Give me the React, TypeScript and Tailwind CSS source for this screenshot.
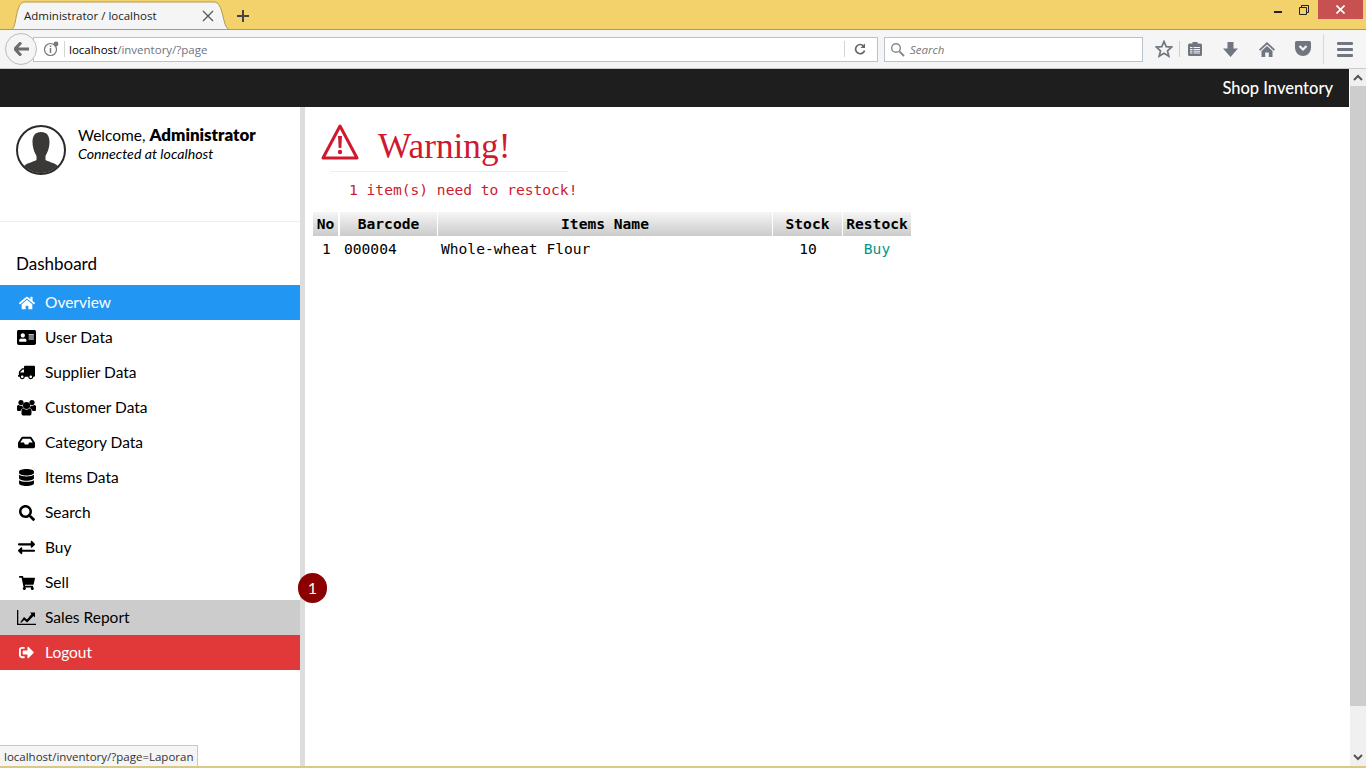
import {
  FaHome,
  FaAddressCard,
  FaTruck,
  FaInbox,
  FaDatabase,
  FaSearch,
  FaExchangeAlt,
  FaShoppingCart,
  FaSignOutAlt,
} from "react-icons/fa";

function UsersIcon() {
  return (
    <svg width="19" height="18" viewBox="0 0 19 18" fill="currentColor">
      <circle cx="9.500" cy="6.500" r="3.600" />
      <circle cx="4" cy="3.600" r="2.600" />
      <circle cx="15" cy="3.600" r="2.600" />
      <path d="M4.500 11.500 C4.500 10 5.500 9.500 6.500 9.500 C8 11 11 11 12.500 9.500 C13.500 9.500 14.500 10 14.500 11.500 V14.500 C14.500 16 13.500 16.500 12.500 16.500 H6.500 C5.500 16.500 4.500 16 4.500 14.500 Z" />
      <path d="M0 7.500 C0 6.500 1 6 1.800 6 C3 7 4.200 7 5.300 6.800 C5.600 8 6 8.700 6.500 9.200 C4.800 9.500 3.600 10.500 3.600 12 H1.500 C0.500 12 0 11.500 0 10.500 Z" />
      <path d="M19 7.500 C19 6.500 18 6 17.200 6 C16 7 14.800 7 13.700 6.800 C13.400 8 13 8.700 12.500 9.200 C14.200 9.500 15.400 10.500 15.400 12 H17.500 C18.500 12 19 11.500 19 10.500 Z" />
    </svg>
  );
}

function ChartIcon() {
  return (
    <svg width="19" height="15" viewBox="0 0 19 15" fill="currentColor">
      <path d="M0 0 H1.300 V13.700 H19 V15 H0 Z" />
      <path d="M3 12.500 L7 7 L10 9.500 L14.500 4 L13 2.500 H18 V7.500 L16.500 6 L10.200 12.500 L7.200 10 L4.500 12.500 Z" />
    </svg>
  );
}

const menu = [
  { label: "Overview", icon: <FaHome size={16} />, row: "bg-[#2196f3] text-white" },
  { label: "User Data", icon: <FaAddressCard size={19} />, row: "text-black" },
  { label: "Supplier Data", icon: <FaTruck size={17} className="-scale-x-100" />, row: "text-black" },
  { label: "Customer Data", icon: <UsersIcon />, row: "text-black" },
  { label: "Category Data", icon: <FaInbox size={17} />, row: "text-black" },
  { label: "Items Data", icon: <FaDatabase size={17} />, row: "text-black" },
  { label: "Search", icon: <FaSearch size={16} />, row: "text-black" },
  { label: "Buy", icon: <FaExchangeAlt size={17} />, row: "text-black" },
  { label: "Sell", icon: <FaShoppingCart size={16} />, row: "text-black", badge: "1" },
  { label: "Sales Report", icon: <ChartIcon />, row: "bg-[#cccccc] text-black" },
  { label: "Logout", icon: <FaSignOutAlt size={15} />, row: "bg-[#e13939] text-white" },
];

function TabBar() {
  return (
    <div className="h-[30px] flex bg-[#f3d26b] border-b border-[#b09a50] relative">
      {/* Active tab */}
      <svg className="absolute left-0 top-0" width="232" height="30" viewBox="0 0 232 30">
        <path d="M12 29.500 C17 27 15 2 25 2 H214 C224 2 222 27 229 29.500 Z" fill="#f5f5f5" stroke="#b09a50" />
      </svg>
      <span className="absolute left-[24px] top-[8px] text-[11.500px] leading-[16px] text-[#222]">Administrator / localhost</span>
      <svg className="absolute left-[202px] top-[10px]" width="12" height="12" viewBox="0 0 12 12">
        <path d="M1 1 L11 11 M11 1 L1 11" stroke="#555" strokeWidth="1.300" />
      </svg>
      <svg className="absolute left-[237px] top-[10px]" width="12" height="12" viewBox="0 0 12 12">
        <path d="M6 0 V12 M0 6 H12" stroke="#444" strokeWidth="2" />
      </svg>
      {/* Window controls */}
      <div className="ml-auto flex items-start mr-[3px]">
        <div className="w-[45px] h-[19px] flex items-center justify-end pr-[14px]">
          <div className="w-[8px] h-[2px] mt-[5px] bg-[#222]" />
        </div>
        <div className="w-[16px] h-[19px] flex items-center justify-center">
          <svg width="10" height="10" viewBox="0 0 10 10">
            <path d="M2.500 2.500 V0.500 H9.500 V7.500 H7.500 M0.500 2.500 H7.500 V9.500 H0.500 Z" fill="none" stroke="#222" />
          </svg>
        </div>
        <div className="w-[6px]" />
        <div className="w-[45px] h-[19px] bg-[#c75050] flex items-center justify-center">
          <svg width="9" height="9" viewBox="0 0 9 9">
            <path d="M0.500 0.500 L8.500 8.500 M8.500 0.500 L0.500 8.500" stroke="#fff" strokeWidth="1.600" />
          </svg>
        </div>
      </div>
    </div>
  );
}

function ToolBar() {
  return (
    <div className="h-[39px] flex items-center bg-[#f5f5f5] border-b border-[#cccccc] pl-[5px] relative">
      {/* Back button over the url bar */}
      <div className="absolute left-[5px] top-[3px] w-[32px] h-[32px] rounded-full border border-[#b4bec8] bg-[#f5f5f5] flex items-center justify-center z-10">
        <svg width="16" height="14" viewBox="0 0 16 14" className="ml-[2px]">
          <path d="M7 0.500 L1 7 L7 13.500 M1.500 7 H15" fill="none" stroke="#6d6d6d" strokeWidth="3" />
        </svg>
      </div>
      <div className="ml-[28px] w-[845px] h-[25px] bg-white border border-[#b8c2cc] flex items-center pl-[9px]">
        <svg width="16" height="16" viewBox="0 0 16 16" className="shrink-0 -mt-[1px]">
          <circle cx="7.500" cy="8.500" r="6" fill="none" stroke="#777" strokeWidth="1.200" />
          <path d="M7.500 7 V12 M7.500 4.500 V6" stroke="#777" strokeWidth="1.500" />
          <circle cx="13" cy="3" r="2.400" fill="#777" />
        </svg>
        <div className="w-px h-[16px] bg-[#d4d4d4] ml-[5px] mr-[4px]" />
        <span className="text-[11.500px] pt-[1px] text-black">localhost</span>
        <span className="text-[11.500px] pt-[1px] text-[#6c7480]">/inventory/?page</span>
        <div className="ml-auto w-px h-[16px] bg-[#d4d4d4]" />
        <svg width="12" height="12" viewBox="0 0 12 12" className="ml-[9px] mr-[11px]">
          <path d="M10 3.500 A4.600 4.600 0 1 0 10.600 7.500" fill="none" stroke="#666" strokeWidth="1.700" />
          <path d="M11 0.500 V5 H6.500 Z" fill="#666" />
        </svg>
      </div>
      <div className="ml-[6px] w-[259px] h-[25px] bg-white border border-[#b8c2cc] flex items-center pl-[5px] gap-[5px]">
        <svg width="15" height="15" viewBox="0 0 15 15">
          <circle cx="6" cy="6" r="4.300" fill="none" stroke="#8a8a8a" strokeWidth="1.500" />
          <path d="M9.500 9.500 L14 14" stroke="#8a8a8a" strokeWidth="2" />
        </svg>
        <span className="text-[11.500px] pt-[1px] italic text-[#777]">Search</span>
      </div>
      <div className="flex items-center ml-[12px]">
        <svg width="18" height="18" viewBox="0 0 18 18">
          <path d="M9 1.500 L11.200 6.600 L16.700 7.100 L12.500 10.800 L13.800 16.200 L9 13.300 L4.200 16.200 L5.500 10.800 L1.300 7.100 L6.800 6.600 Z" fill="none" stroke="#6f7680" strokeWidth="1.700" />
        </svg>
        <div className="w-px h-[16px] bg-[#cfcfcf] ml-[6px] mr-[8px]" />
        <svg width="14" height="15" viewBox="0 0 14 15" className="-mt-[1px]">
          <path d="M1.500 2.500 H4.500 V1 H9.500 V2.500 H12.500 Q14 2.500 14 4 V13.500 Q14 15 12.500 15 H1.500 Q0 15 0 13.500 V4 Q0 2.500 1.500 2.500 Z" fill="#6f7680" />
          <path d="M2 6 H12 V13 H2 Z" fill="#f5f5f5" />
          <path d="M2 7.500 H12 M2 9.800 H12 M2 12 H12 M5 6 V13" stroke="#6f7680" />
        </svg>
        <svg width="15" height="15" viewBox="0 0 15 15" className="ml-[21px]">
          <path d="M4.500 0 H10.500 V6.500 H15 L7.500 15 L0 6.500 H4.500 Z" fill="#6f7680" />
        </svg>
        <svg width="16" height="15" viewBox="0 0 16 15" className="ml-[21px]">
          <path d="M8 0 L16 7.500 L14.800 8.700 L8 2.500 L1.200 8.700 L0 7.500 Z M8 4 L13.500 9 V15 H9.800 V10.500 H6.200 V15 H2.500 V9 Z" fill="#6f7680" />
        </svg>
        <svg width="16" height="15" viewBox="0 0 16 15" className="ml-[20px] -mt-[1px]">
          <path d="M1.500 0 H14.500 Q16 0 16 1.500 V6.500 C16 11.500 12 15 8 15 C4 15 0 11.500 0 6.500 V1.500 Q0 0 1.500 0 Z" fill="#6f7680" />
          <path d="M4.500 5 L8 8.500 L11.500 5" fill="none" stroke="#f5f5f5" strokeWidth="2.200" />
        </svg>
        <div className="w-px h-[30px] bg-[#d8d8d8] ml-[12px] mr-[13px]" />
        <div className="flex flex-col gap-[3px]">
          <div className="w-[16px] h-[3px] rounded-[1px] bg-[#6f7680]" />
          <div className="w-[16px] h-[3px] rounded-[1px] bg-[#6f7680]" />
          <div className="w-[16px] h-[3px] rounded-[1px] bg-[#6f7680]" />
        </div>
      </div>
    </div>
  );
}

function Avatar() {
  return (
    <svg width="50" height="50" viewBox="0 0 50 50" className="shrink-0">
      <circle cx="25" cy="25" r="24" fill="#fff" stroke="#2b2b2b" strokeWidth="2" />
      <path
        d="M25 7 C31 7 33.500 11 33.500 17 C33.500 24 30.500 29 29.500 31 V35 C33 37 39 38 42 41 A24 24 0 0 1 8 41 C11 38 17 37 20.500 35 V31 C19.500 29 16.500 24 16.500 17 C16.500 11 19 7 25 7 Z"
        fill="#3b3838"
      />
    </svg>
  );
}

function Sidebar() {
  return (
    <aside className="w-[305px] shrink-0 border-r-[5px] border-[#dddddd] bg-white font-['Lato',sans-serif]">
      <div className="h-[115px] border-b border-[#eeeeee] pt-[18px] pl-[16px] flex gap-[12px] items-start">
        <Avatar />
        <div className="text-black">
          <div className="text-[15.500px] leading-[20px]">
            Welcome, <b className="text-[16.900px] font-extrabold">Administrator</b>
          </div>
          <div className="text-[14.200px] leading-[18px] italic">Connected at localhost</div>
        </div>
      </div>
      <div className="h-[63px] pl-[16px] pt-[31px] text-[17px] leading-[22px] text-black">Dashboard</div>
      <nav>
        {menu.map((m) => (
          <div key={m.label} className={`relative h-[35px] flex items-center text-[15.500px] ${m.row}`}>
            <div className="w-[45px] pl-[17px] pr-[9px] flex justify-center shrink-0">{m.icon}</div>
            <span>{m.label}</span>
            {m.badge && (
              <div className="absolute -right-[27px] top-[8px] w-[29px] h-[30px] rounded-full bg-[#8b0000] text-white text-[16px] flex items-center justify-center">
                {m.badge}
              </div>
            )}
          </div>
        ))}
      </nav>
    </aside>
  );
}

function RestockTable() {
  const th = "h-[24px] p-0 text-center font-bold text-black bg-gradient-to-b from-[#f6f6f6] to-[#cbcbcb]";
  return (
    <table className="mt-[13px] border-separate border-spacing-0 font-['DejaVu_Sans_Mono',monospace] text-[14.600px] text-black">
      <thead>
        <tr>
          <th className={`${th} w-[27px] border-r-[2px] border-white`}>No</th>
          <th className={`${th} w-[98px] border-r border-white`}>Barcode</th>
          <th className={`${th} w-[335px] border-r border-white`}>Items Name</th>
          <th className={`${th} w-[70px] border-r border-white`}>Stock</th>
          <th className={`${th} w-[68px]`}>Restock</th>
        </tr>
      </thead>
      <tbody>
        <tr>
          <td className="h-[26px] p-0 text-center">1</td>
          <td className="p-0 pl-[4px]">000004</td>
          <td className="p-0 pl-[3px]">Whole-wheat Flour</td>
          <td className="p-0 text-center">10</td>
          <td className="p-0 text-center text-[#009688]">Buy</td>
        </tr>
      </tbody>
    </table>
  );
}

function Main() {
  return (
    <main className="flex-1 min-w-0 bg-white pl-[8px]">
      <div className="flex items-start pt-[16px] pl-[8px] h-[64px] gap-[19px]">
        <svg width="38" height="38" viewBox="0 0 38 38" className="shrink-0">
          <path d="M19 3 L36 35 H2 Z" fill="none" stroke="#d0192f" strokeWidth="3" strokeLinejoin="round" />
          <path d="M17 13 H21 L20.300 25 H17.700 Z" fill="#d0192f" />
          <circle cx="19" cy="29" r="2.200" fill="#d0192f" />
        </svg>
        <h1 className="font-['Liberation_Serif',serif] text-[35.300px] leading-[46px] pt-[1px] text-[#d0192f]">Warning!</h1>
      </div>
      <div className="ml-[17px] w-[238px] border-t border-[#eeeeee]" />
      <p className="mt-[9px] ml-[36px] font-['DejaVu_Sans_Mono',monospace] text-[14.600px] leading-[18px] text-[#d0192f]">
        1 item(s) need to restock!
      </p>
      <RestockTable />
    </main>
  );
}

function Scrollbar() {
  return (
    <div className="w-[17px] shrink-0 border-l border-white bg-[#f0f0f0] flex flex-col items-center">
      <div className="h-[17px] flex items-center justify-center">
        <svg width="10" height="7" viewBox="0 0 10 7">
          <path d="M1 6 L5 2 L9 6" fill="none" stroke="#555" strokeWidth="2" />
        </svg>
      </div>
      <div className="w-full h-[620px] bg-[#cdcdcd]" />
      <div className="mt-auto h-[17px] flex items-center justify-center">
        <svg width="10" height="7" viewBox="0 0 10 7">
          <path d="M1 1 L5 5 L9 1" fill="none" stroke="#555" strokeWidth="2" />
        </svg>
      </div>
    </div>
  );
}

export default function App() {
  return (
    <div className="h-screen w-screen overflow-hidden flex flex-col relative bg-white font-['Open_Sans',sans-serif]">
      <TabBar />
      <ToolBar />
      <div className="flex-1 min-h-0 flex">
        <div className="flex-1 min-w-0 flex flex-col">
          <div className="h-[38px] shrink-0 bg-[#1e1e1e] flex items-center justify-end pr-[16px] pt-[1px] font-['Lato',sans-serif] text-[16.500px] font-medium text-white">
            Shop Inventory
          </div>
          <div className="flex-1 min-h-0 flex">
            <Sidebar />
            <Main />
          </div>
        </div>
        <Scrollbar />
      </div>
      <div className="h-[2px] shrink-0 bg-[#d9c986]" />
      {/* Status tooltip */}
      <div className="absolute left-0 bottom-[2px] h-[21px] w-[198px] bg-[#f5f5f5] border-t border-r border-[#c8c8c8] flex items-center pl-[4px] pt-[1px] whitespace-nowrap text-[11.500px] text-[#333]">
        localhost/inventory/?page=Laporan
      </div>
    </div>
  );
}
